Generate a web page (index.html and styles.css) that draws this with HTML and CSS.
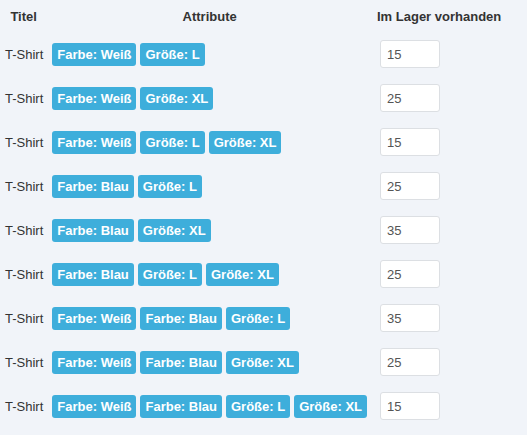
FILE: index.html
```html
<!DOCTYPE html>
<html lang="de">
<head>
<meta charset="utf-8">
<link rel="stylesheet" href="styles.css">
</head>
<body>
<table class="stock">
  <thead>
    <tr>
      <th class="c-title">Titel</th>
      <th class="c-attr">Attribute</th>
      <th class="c-qty">Im Lager vorhanden</th>
    </tr>
  </thead>
  <tbody>
    <tr><td>T-Shirt</td><td><span class="tag">Farbe: Weiß</span><span class="tag">Größe: L</span></td><td><input class="qty" type="text" value="15"></td></tr>
    <tr><td>T-Shirt</td><td><span class="tag">Farbe: Weiß</span><span class="tag">Größe: XL</span></td><td><input class="qty" type="text" value="25"></td></tr>
    <tr><td>T-Shirt</td><td><span class="tag">Farbe: Weiß</span><span class="tag">Größe: L</span><span class="tag">Größe: XL</span></td><td><input class="qty" type="text" value="15"></td></tr>
    <tr><td>T-Shirt</td><td><span class="tag">Farbe: Blau</span><span class="tag">Größe: L</span></td><td><input class="qty" type="text" value="25"></td></tr>
    <tr><td>T-Shirt</td><td><span class="tag">Farbe: Blau</span><span class="tag">Größe: XL</span></td><td><input class="qty" type="text" value="35"></td></tr>
    <tr><td>T-Shirt</td><td><span class="tag">Farbe: Blau</span><span class="tag">Größe: L</span><span class="tag">Größe: XL</span></td><td><input class="qty" type="text" value="25"></td></tr>
    <tr><td>T-Shirt</td><td><span class="tag">Farbe: Weiß</span><span class="tag">Farbe: Blau</span><span class="tag">Größe: L</span></td><td><input class="qty" type="text" value="35"></td></tr>
    <tr><td>T-Shirt</td><td><span class="tag">Farbe: Weiß</span><span class="tag">Farbe: Blau</span><span class="tag">Größe: XL</span></td><td><input class="qty" type="text" value="25"></td></tr>
    <tr><td>T-Shirt</td><td><span class="tag">Farbe: Weiß</span><span class="tag">Farbe: Blau</span><span class="tag">Größe: L</span><span class="tag">Größe: XL</span></td><td><input class="qty" type="text" value="15"></td></tr>
  </tbody>
</table>
</body>
</html>
```
FILE: styles.css
```css
html, body {
  margin: 0;
  padding: 0;
  background: #f1f4f9;
  font-family: "Liberation Sans", Arial, sans-serif;
  font-size: 13px;
  color: #333;
}

.stock {
  border-collapse: collapse;
  border-spacing: 0;
}

.stock th {
  font-weight: bold;
  text-align: center;
  padding: 9px 5px 7px;
  line-height: 16px;
  color: #333;
}

.stock td {
  padding: 8px 5px;
  vertical-align: middle;
  white-space: nowrap;
  line-height: 18px;
}

.stock td:first-child {
  padding-right: 4px;
  padding-top: 9px;
  padding-bottom: 7px;
}

.c-title { width: 37px; }

.tag {
  display: inline-block;
  background: #3eaedb;
  color: #fff;
  font-weight: bold;
  font-size: 13px;
  line-height: 23px;
  height: 23px;
  padding: 0 5px;
  border-radius: 3px;
  margin-right: 4px;
  vertical-align: middle;
}

.tag:last-child { margin-right: 0; }

.qty {
  display: block;
  box-sizing: border-box;
  width: 60px;
  height: 28px;
  margin-left: 3px;
  padding: 0 6px;
  border: 1px solid #dcdfe3;
  border-radius: 3px;
  background: #fff;
  font-family: "Liberation Sans", Arial, sans-serif;
  font-size: 13px;
  color: #555;
}
```
